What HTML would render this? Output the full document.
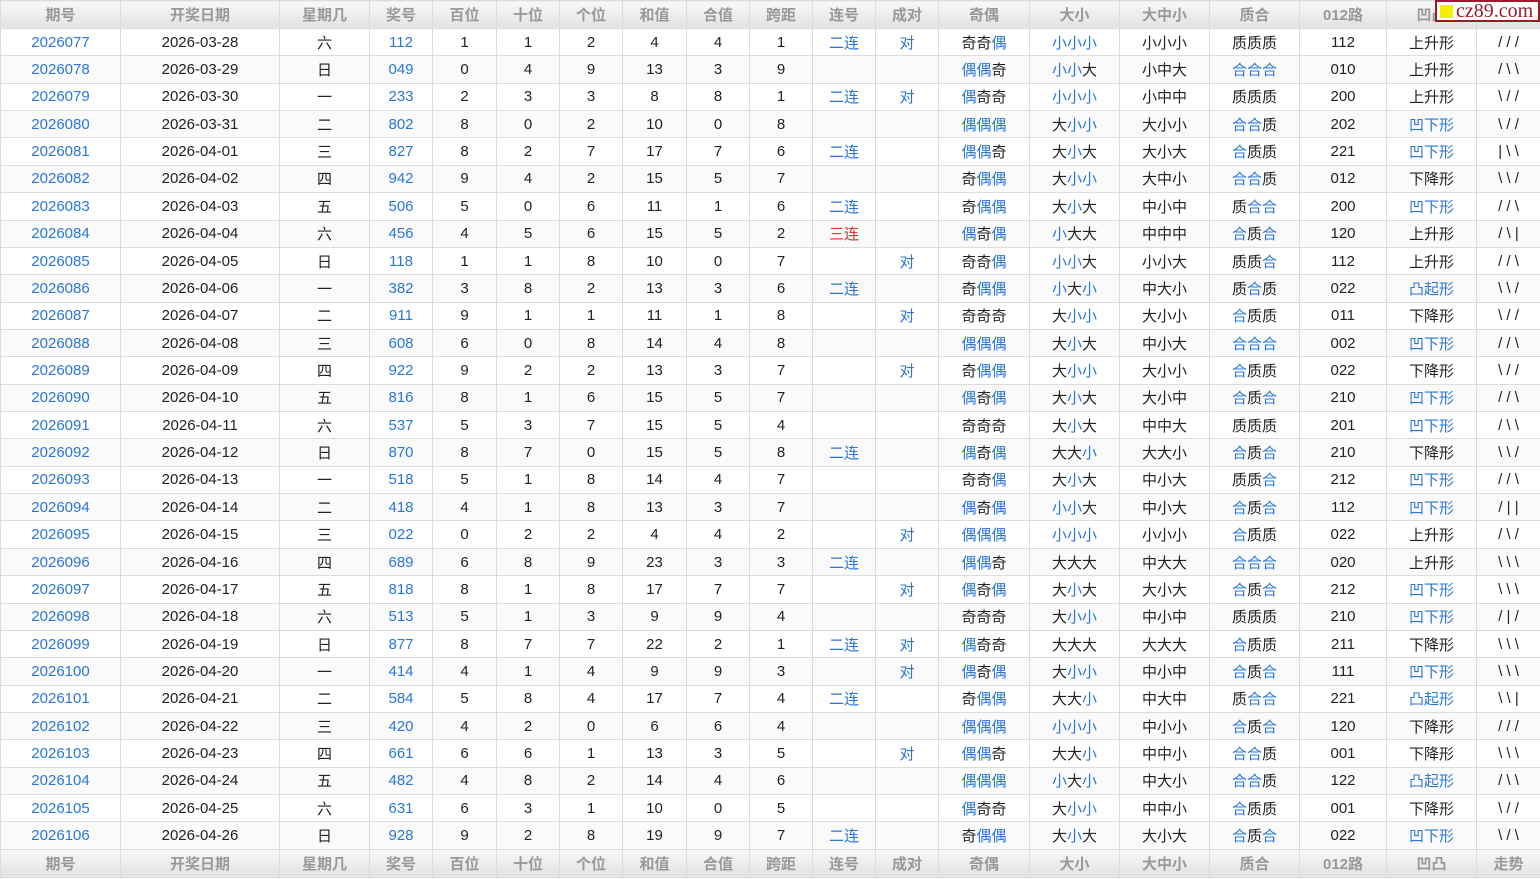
<!DOCTYPE html>
<html><head><meta charset="utf-8">
<style>
body{margin:0;width:1540px;height:879px;overflow:hidden;background:#fff;font-family:"Liberation Sans","Noto Sans CJK SC",sans-serif;}
table{border-collapse:collapse;table-layout:fixed;width:1540px;font-size:15px;color:#222;}
td,th{border:1px solid #dcdcdc;text-align:center;padding:0;height:26.37px;white-space:nowrap;overflow:hidden;}
th{height:27px;background:linear-gradient(#f8f8f8,#e2e2e2);color:#999;font-weight:bold;font-size:15px;}
tbody tr:nth-child(even){background:#fafafa;}
i,.b{color:#2a76d8;font-style:normal;}
.r{color:#e03030;}
#wm{position:absolute;right:0;top:0;width:105px;height:22px;background:#fff;border:2px solid #9b1b2b;box-sizing:border-box;font-family:"Liberation Serif",serif;color:#9b1b2b;font-size:20px;line-height:18px;white-space:nowrap;}
#wm span{display:inline-block;width:13px;height:13px;background:#f5f000;margin:0 3px 0 3px;vertical-align:-1px;}
</style></head><body>
<table>
<colgroup><col style="width:120px"><col style="width:159px"><col style="width:90px"><col style="width:63px"><col style="width:64px"><col style="width:63px"><col style="width:63px"><col style="width:64px"><col style="width:63px"><col style="width:63px"><col style="width:63px"><col style="width:63px"><col style="width:91px"><col style="width:90px"><col style="width:90px"><col style="width:90px"><col style="width:87px"><col style="width:90px"><col style="width:64px"></colgroup>
<thead><tr><th>期号</th><th>开奖日期</th><th>星期几</th><th>奖号</th><th>百位</th><th>十位</th><th>个位</th><th>和值</th><th>合值</th><th>跨距</th><th>连号</th><th>成对</th><th>奇偶</th><th>大小</th><th>大中小</th><th>质合</th><th>012路</th><th>凹凸</th><th>走势</th></tr></thead>
<tbody>
<tr><td class="b">2026077</td><td>2026-03-28</td><td>六</td><td class="b">112</td><td>1</td><td>1</td><td>2</td><td>4</td><td>4</td><td>1</td><td class="b">二连</td><td class="b">对</td><td>奇奇<i>偶</i></td><td><i>小小小</i></td><td>小小小</td><td>质质质</td><td>112</td><td>上升形</td><td>/ / /</td></tr>
<tr><td class="b">2026078</td><td>2026-03-29</td><td>日</td><td class="b">049</td><td>0</td><td>4</td><td>9</td><td>13</td><td>3</td><td>9</td><td></td><td></td><td><i>偶偶</i>奇</td><td><i>小小</i>大</td><td>小中大</td><td><i>合合合</i></td><td>010</td><td>上升形</td><td>/ \ \</td></tr>
<tr><td class="b">2026079</td><td>2026-03-30</td><td>一</td><td class="b">233</td><td>2</td><td>3</td><td>3</td><td>8</td><td>8</td><td>1</td><td class="b">二连</td><td class="b">对</td><td><i>偶</i>奇奇</td><td><i>小小小</i></td><td>小中中</td><td>质质质</td><td>200</td><td>上升形</td><td>\ / /</td></tr>
<tr><td class="b">2026080</td><td>2026-03-31</td><td>二</td><td class="b">802</td><td>8</td><td>0</td><td>2</td><td>10</td><td>0</td><td>8</td><td></td><td></td><td><i>偶偶偶</i></td><td>大<i>小小</i></td><td>大小小</td><td><i>合合</i>质</td><td>202</td><td class="b">凹下形</td><td>\ / /</td></tr>
<tr><td class="b">2026081</td><td>2026-04-01</td><td>三</td><td class="b">827</td><td>8</td><td>2</td><td>7</td><td>17</td><td>7</td><td>6</td><td class="b">二连</td><td></td><td><i>偶偶</i>奇</td><td>大<i>小</i>大</td><td>大小大</td><td><i>合</i>质质</td><td>221</td><td class="b">凹下形</td><td>| \ \</td></tr>
<tr><td class="b">2026082</td><td>2026-04-02</td><td>四</td><td class="b">942</td><td>9</td><td>4</td><td>2</td><td>15</td><td>5</td><td>7</td><td></td><td></td><td>奇<i>偶偶</i></td><td>大<i>小小</i></td><td>大中小</td><td><i>合合</i>质</td><td>012</td><td>下降形</td><td>\ \ /</td></tr>
<tr><td class="b">2026083</td><td>2026-04-03</td><td>五</td><td class="b">506</td><td>5</td><td>0</td><td>6</td><td>11</td><td>1</td><td>6</td><td class="b">二连</td><td></td><td>奇<i>偶偶</i></td><td>大<i>小</i>大</td><td>中小中</td><td>质<i>合合</i></td><td>200</td><td class="b">凹下形</td><td>/ / \</td></tr>
<tr><td class="b">2026084</td><td>2026-04-04</td><td>六</td><td class="b">456</td><td>4</td><td>5</td><td>6</td><td>15</td><td>5</td><td>2</td><td class="r">三连</td><td></td><td><i>偶</i>奇<i>偶</i></td><td><i>小</i>大大</td><td>中中中</td><td><i>合</i>质<i>合</i></td><td>120</td><td>上升形</td><td>/ \ |</td></tr>
<tr><td class="b">2026085</td><td>2026-04-05</td><td>日</td><td class="b">118</td><td>1</td><td>1</td><td>8</td><td>10</td><td>0</td><td>7</td><td></td><td class="b">对</td><td>奇奇<i>偶</i></td><td><i>小小</i>大</td><td>小小大</td><td>质质<i>合</i></td><td>112</td><td>上升形</td><td>/ / \</td></tr>
<tr><td class="b">2026086</td><td>2026-04-06</td><td>一</td><td class="b">382</td><td>3</td><td>8</td><td>2</td><td>13</td><td>3</td><td>6</td><td class="b">二连</td><td></td><td>奇<i>偶偶</i></td><td><i>小</i>大<i>小</i></td><td>中大小</td><td>质<i>合</i>质</td><td>022</td><td class="b">凸起形</td><td>\ \ /</td></tr>
<tr><td class="b">2026087</td><td>2026-04-07</td><td>二</td><td class="b">911</td><td>9</td><td>1</td><td>1</td><td>11</td><td>1</td><td>8</td><td></td><td class="b">对</td><td>奇奇奇</td><td>大<i>小小</i></td><td>大小小</td><td><i>合</i>质质</td><td>011</td><td>下降形</td><td>\ / /</td></tr>
<tr><td class="b">2026088</td><td>2026-04-08</td><td>三</td><td class="b">608</td><td>6</td><td>0</td><td>8</td><td>14</td><td>4</td><td>8</td><td></td><td></td><td><i>偶偶偶</i></td><td>大<i>小</i>大</td><td>中小大</td><td><i>合合合</i></td><td>002</td><td class="b">凹下形</td><td>/ / \</td></tr>
<tr><td class="b">2026089</td><td>2026-04-09</td><td>四</td><td class="b">922</td><td>9</td><td>2</td><td>2</td><td>13</td><td>3</td><td>7</td><td></td><td class="b">对</td><td>奇<i>偶偶</i></td><td>大<i>小小</i></td><td>大小小</td><td><i>合</i>质质</td><td>022</td><td>下降形</td><td>\ / /</td></tr>
<tr><td class="b">2026090</td><td>2026-04-10</td><td>五</td><td class="b">816</td><td>8</td><td>1</td><td>6</td><td>15</td><td>5</td><td>7</td><td></td><td></td><td><i>偶</i>奇<i>偶</i></td><td>大<i>小</i>大</td><td>大小中</td><td><i>合</i>质<i>合</i></td><td>210</td><td class="b">凹下形</td><td>/ / \</td></tr>
<tr><td class="b">2026091</td><td>2026-04-11</td><td>六</td><td class="b">537</td><td>5</td><td>3</td><td>7</td><td>15</td><td>5</td><td>4</td><td></td><td></td><td>奇奇奇</td><td>大<i>小</i>大</td><td>中中大</td><td>质质质</td><td>201</td><td class="b">凹下形</td><td>/ \ \</td></tr>
<tr><td class="b">2026092</td><td>2026-04-12</td><td>日</td><td class="b">870</td><td>8</td><td>7</td><td>0</td><td>15</td><td>5</td><td>8</td><td class="b">二连</td><td></td><td><i>偶</i>奇<i>偶</i></td><td>大大<i>小</i></td><td>大大小</td><td><i>合</i>质<i>合</i></td><td>210</td><td>下降形</td><td>\ \ /</td></tr>
<tr><td class="b">2026093</td><td>2026-04-13</td><td>一</td><td class="b">518</td><td>5</td><td>1</td><td>8</td><td>14</td><td>4</td><td>7</td><td></td><td></td><td>奇奇<i>偶</i></td><td>大<i>小</i>大</td><td>中小大</td><td>质质<i>合</i></td><td>212</td><td class="b">凹下形</td><td>/ / \</td></tr>
<tr><td class="b">2026094</td><td>2026-04-14</td><td>二</td><td class="b">418</td><td>4</td><td>1</td><td>8</td><td>13</td><td>3</td><td>7</td><td></td><td></td><td><i>偶</i>奇<i>偶</i></td><td><i>小小</i>大</td><td>中小大</td><td><i>合</i>质<i>合</i></td><td>112</td><td class="b">凹下形</td><td>/ | |</td></tr>
<tr><td class="b">2026095</td><td>2026-04-15</td><td>三</td><td class="b">022</td><td>0</td><td>2</td><td>2</td><td>4</td><td>4</td><td>2</td><td></td><td class="b">对</td><td><i>偶偶偶</i></td><td><i>小小小</i></td><td>小小小</td><td><i>合</i>质质</td><td>022</td><td>上升形</td><td>/ \ /</td></tr>
<tr><td class="b">2026096</td><td>2026-04-16</td><td>四</td><td class="b">689</td><td>6</td><td>8</td><td>9</td><td>23</td><td>3</td><td>3</td><td class="b">二连</td><td></td><td><i>偶偶</i>奇</td><td>大大大</td><td>中大大</td><td><i>合合合</i></td><td>020</td><td>上升形</td><td>\ \ \</td></tr>
<tr><td class="b">2026097</td><td>2026-04-17</td><td>五</td><td class="b">818</td><td>8</td><td>1</td><td>8</td><td>17</td><td>7</td><td>7</td><td></td><td class="b">对</td><td><i>偶</i>奇<i>偶</i></td><td>大<i>小</i>大</td><td>大小大</td><td><i>合</i>质<i>合</i></td><td>212</td><td class="b">凹下形</td><td>\ \ \</td></tr>
<tr><td class="b">2026098</td><td>2026-04-18</td><td>六</td><td class="b">513</td><td>5</td><td>1</td><td>3</td><td>9</td><td>9</td><td>4</td><td></td><td></td><td>奇奇奇</td><td>大<i>小小</i></td><td>中小中</td><td>质质质</td><td>210</td><td class="b">凹下形</td><td>/ | /</td></tr>
<tr><td class="b">2026099</td><td>2026-04-19</td><td>日</td><td class="b">877</td><td>8</td><td>7</td><td>7</td><td>22</td><td>2</td><td>1</td><td class="b">二连</td><td class="b">对</td><td><i>偶</i>奇奇</td><td>大大大</td><td>大大大</td><td><i>合</i>质质</td><td>211</td><td>下降形</td><td>\ \ \</td></tr>
<tr><td class="b">2026100</td><td>2026-04-20</td><td>一</td><td class="b">414</td><td>4</td><td>1</td><td>4</td><td>9</td><td>9</td><td>3</td><td></td><td class="b">对</td><td><i>偶</i>奇<i>偶</i></td><td>大<i>小小</i></td><td>中小中</td><td><i>合</i>质<i>合</i></td><td>111</td><td class="b">凹下形</td><td>\ \ \</td></tr>
<tr><td class="b">2026101</td><td>2026-04-21</td><td>二</td><td class="b">584</td><td>5</td><td>8</td><td>4</td><td>17</td><td>7</td><td>4</td><td class="b">二连</td><td></td><td>奇<i>偶偶</i></td><td>大大<i>小</i></td><td>中大中</td><td>质<i>合合</i></td><td>221</td><td class="b">凸起形</td><td>\ \ |</td></tr>
<tr><td class="b">2026102</td><td>2026-04-22</td><td>三</td><td class="b">420</td><td>4</td><td>2</td><td>0</td><td>6</td><td>6</td><td>4</td><td></td><td></td><td><i>偶偶偶</i></td><td><i>小小小</i></td><td>中小小</td><td><i>合</i>质<i>合</i></td><td>120</td><td>下降形</td><td>/ / /</td></tr>
<tr><td class="b">2026103</td><td>2026-04-23</td><td>四</td><td class="b">661</td><td>6</td><td>6</td><td>1</td><td>13</td><td>3</td><td>5</td><td></td><td class="b">对</td><td><i>偶偶</i>奇</td><td>大大<i>小</i></td><td>中中小</td><td><i>合合</i>质</td><td>001</td><td>下降形</td><td>\ \ \</td></tr>
<tr><td class="b">2026104</td><td>2026-04-24</td><td>五</td><td class="b">482</td><td>4</td><td>8</td><td>2</td><td>14</td><td>4</td><td>6</td><td></td><td></td><td><i>偶偶偶</i></td><td><i>小</i>大<i>小</i></td><td>中大小</td><td><i>合合</i>质</td><td>122</td><td class="b">凸起形</td><td>/ \ \</td></tr>
<tr><td class="b">2026105</td><td>2026-04-25</td><td>六</td><td class="b">631</td><td>6</td><td>3</td><td>1</td><td>10</td><td>0</td><td>5</td><td></td><td></td><td><i>偶</i>奇奇</td><td>大<i>小小</i></td><td>中中小</td><td><i>合</i>质质</td><td>001</td><td>下降形</td><td>\ / /</td></tr>
<tr><td class="b">2026106</td><td>2026-04-26</td><td>日</td><td class="b">928</td><td>9</td><td>2</td><td>8</td><td>19</td><td>9</td><td>7</td><td class="b">二连</td><td></td><td>奇<i>偶偶</i></td><td>大<i>小</i>大</td><td>大小大</td><td><i>合</i>质<i>合</i></td><td>022</td><td class="b">凹下形</td><td>\ / \</td></tr>
</tbody>
<tfoot><tr><th>期号</th><th>开奖日期</th><th>星期几</th><th>奖号</th><th>百位</th><th>十位</th><th>个位</th><th>和值</th><th>合值</th><th>跨距</th><th>连号</th><th>成对</th><th>奇偶</th><th>大小</th><th>大中小</th><th>质合</th><th>012路</th><th>凹凸</th><th>走势</th></tr></tfoot>
</table>
<div id="wm"><span></span>cz89.com</div>
</body></html>
